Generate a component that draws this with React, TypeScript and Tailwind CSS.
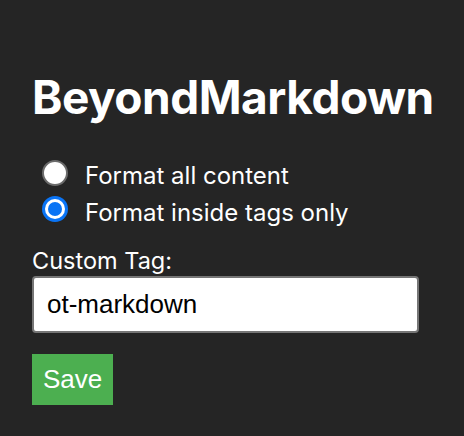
import { useState } from 'react';

const SYS = { fontFamily: 'Inter, "Noto Sans", sans-serif' };
const ARIAL = { fontFamily: '"Liberation Sans", Arial, sans-serif' };

function Radio({ checked }: { checked: boolean }) {
  if (checked) {
    return (
      <span className="mb-[7px] flex h-[26px] w-[26px] shrink-0 items-center justify-center rounded-full bg-[#0a74f5]">
        <span className="flex h-[20px] w-[20px] items-center justify-center rounded-full bg-white">
          <span className="h-[14px] w-[14px] rounded-full bg-[#0a74f5]" />
        </span>
      </span>
    );
  }
  return <span className="mb-[7px] h-[26px] w-[26px] shrink-0 rounded-full border-2 border-[#6b6b6b] bg-white" />;
}

export default function App() {
  const [mode, setMode] = useState<'all' | 'tags'>('tags');
  const [tag, setTag] = useState('ot-markdown');

  return (
    <div className="min-h-screen bg-[#252525] px-8 pt-[74px] text-white" style={SYS}>
      <h1 className="text-[46px] font-bold leading-none tracking-[-0.5px]">BeyondMarkdown</h1>

      <div className="mt-[38px] flex flex-col">
        <label className="flex h-[36.5px] cursor-pointer items-center gap-[17px] pl-[10px]" onClick={() => setMode('all')}>
          <Radio checked={mode === 'all'} />
          <span className="text-[24px] leading-[36px]">Format all content</span>
        </label>
        <label className="flex h-[36.5px] cursor-pointer items-center gap-[17px] pl-[10px]" onClick={() => setMode('tags')}>
          <Radio checked={mode === 'tags'} />
          <span className="text-[24px] leading-[36px]">Format inside tags only</span>
        </label>
      </div>

      <div className="mt-[17px] text-[23.5px] leading-[26px]">Custom Tag:</div>
      <input
        value={tag}
        onChange={(e) => setTag(e.target.value)}
        className="mt-[2px] block h-[57px] w-[387px] rounded-[4px] border-2 border-[#767676] bg-white px-[13px] text-[26px] text-black outline-none"
        style={ARIAL}
      />

      <button
        type="button"
        className="mt-[21px] block h-[51px] bg-[#4caf50] px-[11px] text-[26px] text-white"
        style={ARIAL}
      >
        Save
      </button>
    </div>
  );
}
